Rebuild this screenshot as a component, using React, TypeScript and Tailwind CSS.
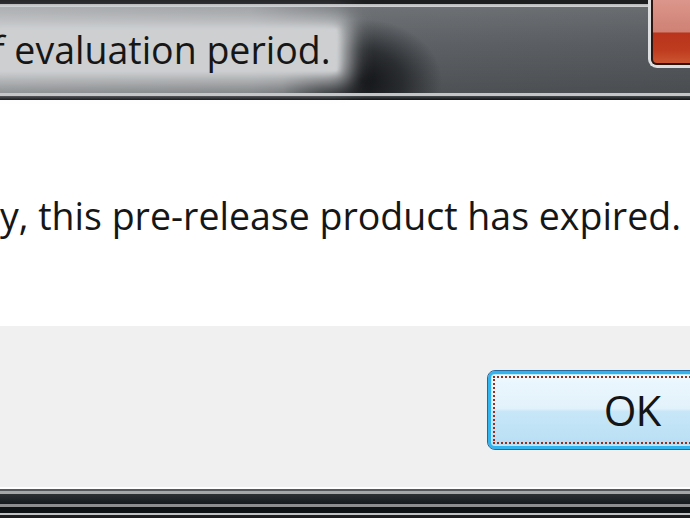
export default function App() {
  return (
    <div className="relative w-[690px] h-[518px] overflow-hidden bg-white font-['Open_Sans',sans-serif] text-[#161616]">
      {/* window frame, top */}
      <div className="h-[4px] bg-[#1c1e20]" />
      <div className="h-[3px] bg-[linear-gradient(to_bottom,#b4b6b8,#d4d6d8)]" />

      {/* title bar */}
      <div className="h-[86px] pt-[24px] bg-[radial-gradient(ellipse_80px_62px_at_362px_74px,rgba(14,16,19,0.95)_0%,rgba(14,16,19,0.6)_50%,rgba(14,16,19,0)_100%),linear-gradient(to_bottom,rgba(255,255,255,0.1),rgba(0,0,0,0)_45%,rgba(0,0,0,0.16)),linear-gradient(to_right,#9ea1a4_0px,#8f9295_250px,#5e6266_350px,#575b5f_690px)]">
        <span className="inline-block ml-[-8px] pr-[4px] text-[37.5px] leading-none whitespace-nowrap bg-[#cdcfd1] shadow-[0_0_20px_14px_#cdcfd1,0_0_6px_4px_#cdcfd1,0_0_2px_2px_#cdcfd1]">
          f evaluation period.
        </span>
      </div>

      <div className="h-[3px] bg-[#c3c5c7]" />
      <div className="h-[4px] bg-[linear-gradient(to_bottom,#46494c,#111315)]" />

      {/* message */}
      <div className="h-[226px] pt-[97px] bg-white">
        <p className="text-[37.5px] leading-none whitespace-nowrap">
          y, this pre-release product has expired.
        </p>
      </div>

      {/* button strip */}
      <div className="h-[161px] flex pl-[487px] pt-[44px] bg-[#f0f0f0]">
        <button className="shrink-0 w-[290px] h-[80px] p-[5px] rounded-[8px] border border-[#2a6697] bg-[linear-gradient(to_bottom,#eef8fe_0%,#e2f2fb_48%,#c7e7f8_52%,#b7ddf3_100%)] shadow-[inset_0_0_0_3px_#33b4ee,inset_0_0_0_4px_#bfe8fb]">
          <div className="h-full flex items-center justify-center border-2 border-dotted border-[#93301c] text-[42px] tracking-[-1px] leading-none text-[#141414]">
            OK
          </div>
        </button>
      </div>

      {/* window frame, bottom */}
      <div className="h-[2px] bg-white" />
      <div className="h-[2px] bg-[#55585a]" />
      <div className="h-[3px] bg-[#a4a6a8]" />
      <div className="h-[10px] bg-[linear-gradient(to_bottom,#2c3033,#151b1f)]" />
      <div className="h-[3px] bg-[#8c8e90]" />
      <div className="h-[6px] bg-[#0f1214]" />
      <div className="h-[2px] bg-[#bfc1c3]" />
      <div className="h-[3px] bg-[#1c1e20]" />

      {/* close button, sits over the frame */}
      <div className="absolute left-[648px] top-0 w-[70px] h-[68px] border-l-[3px] border-b-[3px] border-[#dcdee0] rounded-bl-[9px]">
        <div className="h-full border-l-2 border-b-2 border-[#2e1510] rounded-bl-[6px] bg-[linear-gradient(to_bottom,#dc968b_0%,#cf8175_50%,#b9341b_53%,#bf3c20_80%,#cc5531_100%)]" />
      </div>
    </div>
  );
}
